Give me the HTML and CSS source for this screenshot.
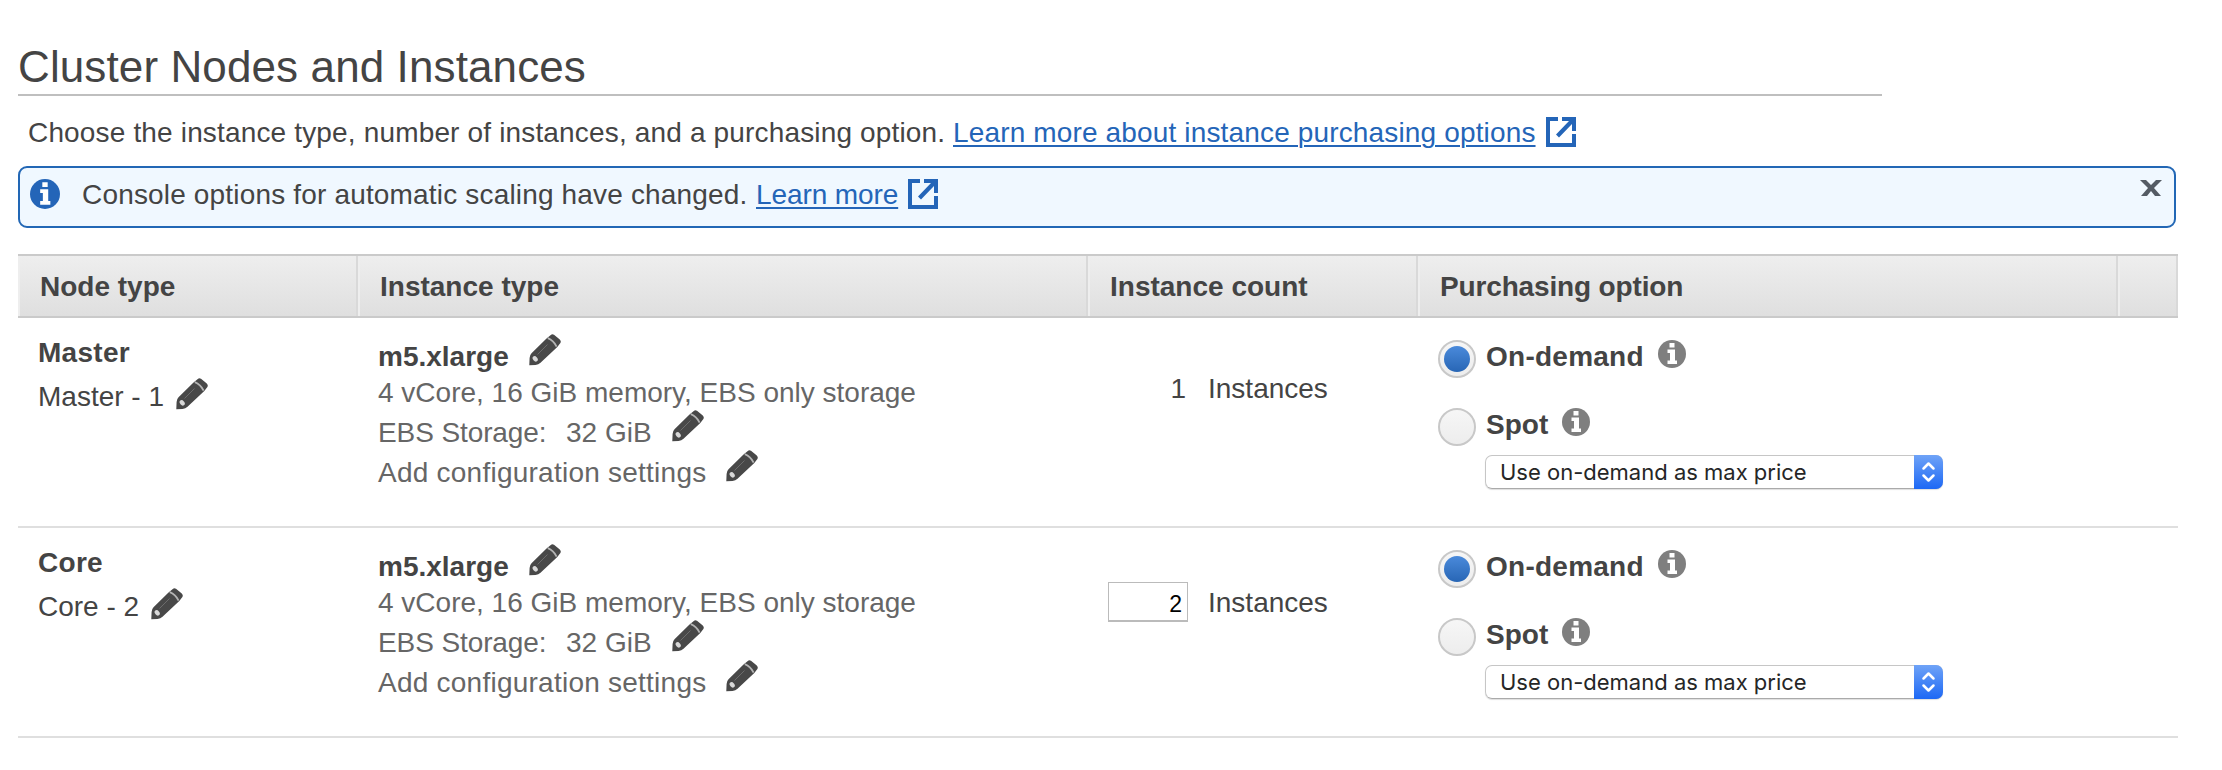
FILE: index.html
```html
<!DOCTYPE html>
<html lang="en">
<head>
<meta charset="utf-8">
<title>Cluster Nodes and Instances</title>
<link rel="stylesheet" href="styles.css">
</head>
<body>
<svg class="defs" width="0" height="0" aria-hidden="true">
  <symbol id="pencil" viewBox="0 0 32 32">
    <path fill="#484848" d="M17.500 4.500 21.800.9Q23.200-.3 25 .8L30.500 5.200Q32.500 7 31.400 9L28.300 13 11.500 28.800Q9.500 30.800 6.500 31L.3 31.300.6 24Q.7 21 2.500 19.200z"/>
    <path stroke="#b4b4b4" stroke-width="1.800" fill="none" d="M18.800 4.200Q24.500 6.500 27.600 12.600"/>
    <path stroke="#6c6c6c" stroke-width="1" fill="none" d="M18.500 10.500 8.500 20.500"/>
    <ellipse cx="6.200" cy="24.800" rx="2.200" ry="3" transform="rotate(-40 6.200 24.800)" fill="#d8d8d8"/>
  </symbol>
  <symbol id="ext" viewBox="0 0 30 30">
    <path fill="currentColor" d="M0 0H12V4H4V26H26V17H30V30H0zM16 0H30V14H26V7L13 20.500 10 17.500 23 4H16z"/>
  </symbol>
  <symbol id="info" viewBox="0 0 28 28">
    <circle cx="14" cy="14" r="14" fill="currentColor"/>
    <path fill="#fff" d="M11.500 3h5v4.500h-5zM9.500 9.500h7.500v11h2V24H9.500v-3.500h2.500V13H9.500z"/>
  </symbol>
</svg>
<main class="page">
  <h1 class="title"><span>Cluster Nodes and Instances</span></h1>
  <p class="intro"><span class="t-intro">Choose the instance type, number of instances, and a purchasing option.</span><a class="t-link1" href="#">Learn more about instance purchasing options</a><svg class="ext"><use href="#ext"/></svg></p>
  <div class="alert">
    <svg class="alert-info"><use href="#info"/></svg>
    <span class="t-alert">Console options for automatic scaling have changed.</span><a class="t-link2" href="#">Learn more</a><svg class="ext"><use href="#ext"/></svg>
    <svg class="close" viewBox="0 0 22 16"><path d="M0 0H6L11 5 16 0H22L14 8 21 16H15L11 11 7 16H1L8 8z" fill="#545b64"/></svg>
  </div>
  <section class="table">
    <div class="head cols">
      <div><span>Node type</span></div><div><span>Instance type</span></div><div><span>Instance count</span></div><div><span class="t-buy">Purchasing option</span></div><div></div>
    </div>
    <div class="row cols">
      <div class="node">
        <div class="name"><b>Master</b></div>
        <div class="label"><span>Master - 1</span><svg class="pencil"><use href="#pencil"/></svg></div>
      </div>
      <div class="type">
        <div class="model"><b>m5.xlarge</b><svg class="pencil"><use href="#pencil"/></svg></div>
        <div class="spec"><span>4 vCore, 16 GiB memory, EBS only storage</span></div>
        <div class="line"><span class="ebs">EBS Storage:</span><span class="size">32 GiB</span><svg class="pencil"><use href="#pencil"/></svg></div>
        <div class="line"><span class="t-add">Add configuration settings</span><svg class="pencil"><use href="#pencil"/></svg></div>
      </div>
      <div class="count"><span class="number">1</span><span class="t-inst">Instances</span></div>
      <div class="buy">
        <label class="choice"><i class="radio on"></i><b class="t-od">On-demand</b><svg class="info"><use href="#info"/></svg></label>
        <label class="choice"><i class="radio"></i><b class="t-spot">Spot</b><svg class="info"><use href="#info"/></svg></label>
        <div class="select"><span>Use on-demand as max price</span><svg class="stepper" viewBox="0 0 29 34"><path d="M9.500 13.500 14.500 8.500 19.500 13.500M9.500 20.500 14.500 25.500 19.500 20.500"/></svg></div>
      </div>
      <div></div>
    </div>
    <div class="row cols">
      <div class="node">
        <div class="name"><b>Core</b></div>
        <div class="label"><span>Core - 2</span><svg class="pencil"><use href="#pencil"/></svg></div>
      </div>
      <div class="type">
        <div class="model"><b>m5.xlarge</b><svg class="pencil"><use href="#pencil"/></svg></div>
        <div class="spec"><span>4 vCore, 16 GiB memory, EBS only storage</span></div>
        <div class="line"><span class="ebs">EBS Storage:</span><span class="size">32 GiB</span><svg class="pencil"><use href="#pencil"/></svg></div>
        <div class="line"><span class="t-add">Add configuration settings</span><svg class="pencil"><use href="#pencil"/></svg></div>
      </div>
      <div class="count editable"><span class="number">2</span><span class="t-inst">Instances</span></div>
      <div class="buy">
        <label class="choice"><i class="radio on"></i><b class="t-od">On-demand</b><svg class="info"><use href="#info"/></svg></label>
        <label class="choice"><i class="radio"></i><b class="t-spot">Spot</b><svg class="info"><use href="#info"/></svg></label>
        <div class="select"><span>Use on-demand as max price</span><svg class="stepper" viewBox="0 0 29 34"><path d="M9.500 13.500 14.500 8.500 19.500 13.500M9.500 20.500 14.500 25.500 19.500 20.500"/></svg></div>
      </div>
      <div></div>
    </div>
  </section>
</main>
</body>
</html>
```

FILE: styles.css
```css
* { box-sizing: border-box; }
body { margin: 0; background: #fff; color: #444; font: 28px/40px "Liberation Sans", Arial, sans-serif; white-space: nowrap; }
.defs { display: block; }
svg { flex: none; overflow: visible; }
a { color: #2465b8; text-decoration: underline; text-decoration-thickness: 2px; text-underline-offset: 3px; }
.page { padding: 40px 44px 0 18px; }
.title { margin: 0; width: 1864px; height: 56px; border-bottom: 2px solid #bfbfbf; font-size: 44px; font-weight: 400; line-height: 54px; letter-spacing: .11px; }
.intro { display: flex; align-items: center; margin: 16px 0 0 10px; height: 40px; }
.intro span, .intro a, .alert span, .alert a, .label span, .type span, .model b { padding-top: 2px; }
.t-intro { width: 925px; letter-spacing: .16px; }
.t-link1 { width: 583px; letter-spacing: .15px; }
.ext { width: 30px; height: 30px; margin-left: 10px; color: #2465b8; }
.alert { display: flex; align-items: center; width: 2158px; height: 62px; margin-top: 14px; padding: 0 12px 6px 10px; border: 2px solid #2267b5; border-radius: 9px; background: #f0f8ff; }
.alert-info { width: 30px; height: 30px; margin-right: 22px; color: #2465b8; }
.t-alert { width: 674px; letter-spacing: .17px; }
.t-link2 { width: 142px; letter-spacing: -.1px; }
.close { width: 22px; height: 16px; margin: -12px 0 0 auto; }
.table { width: 2160px; margin-top: 26px; }
.cols { display: grid; grid-template-columns: 340px 730px 330px 700px 60px; }
.head { height: 64px; border: solid #cacaca; border-width: 2px 0; background: linear-gradient(#eee, #dfdfdf); font-weight: 700; line-height: 62px; }
.head > div { height: 60px; padding-left: 20px; border-left: 2px solid #eee; border-right: 2px solid #d9d9d9; }
.t-buy { letter-spacing: -.15px; }
.row { height: 210px; border-bottom: 2px solid #dfdfdf; }
.node { padding: 15px 0 0 20px; }
.name b { letter-spacing: .3px; }
.label { display: flex; align-items: center; height: 44px; padding-top: 2px; }
.label .pencil { margin: -5px 0 0 12px; }
.pencil { width: 32px; height: 32px; }
.type { padding: 18px 0 0 20px; color: #666; }
.type b { color: #444; }
.model, .line, .spec { display: flex; align-items: center; height: 40px; }
.model .pencil, .line .pencil { margin: -12px 0 0 20px; }
.spec { height: 36px; line-height: 36px; margin-top: -2px; }
.line:nth-child(3) { margin-top: 2px; }
.ebs { width: 188px; letter-spacing: -.1px; }
.t-add { letter-spacing: .24px; }
.count { display: flex; align-items: center; height: 40px; margin-top: 51px; padding-left: 20px; }
.number { width: 80px; padding-right: 2px; text-align: right; }
.t-inst { margin-left: 20px; }
.editable { margin-top: 54px; }
.editable .t-inst { padding-top: 2px; }
.editable .number { height: 40px; padding-right: 5px; border: 2px solid #bbb; border-width: 1px 1px 2px; color: #000; font-size: 23px; line-height: 42px; }
.buy { padding: 20px 0 0 20px; }
.choice { display: flex; align-items: center; height: 42px; margin-bottom: 26px; }
.choice b { margin: -4px 0 0 10px; }
.t-od { letter-spacing: .25px; }
.radio { flex: none; width: 38px; height: 38px; border: 2px solid #c8c8c8; border-radius: 50%; background: linear-gradient(#f6f6f6, #ededed); }
.on { padding: 4px; }
.on::before { content: ""; display: block; height: 26px; border-radius: 50%; background: linear-gradient(#4a8adb, #2866b5); }
.info { width: 28px; height: 28px; margin: -10px 0 0 14px; color: #7f7f7f; }
.select { display: flex; width: 458px; height: 34px; margin: -19px 0 0 47px; padding-left: 14px; border: 1px solid #c6c6c6; border-bottom-color: #aaa; border-radius: 7px; box-shadow: 0 1px 1px #0002; color: #262626; font: 22px/33px Inter, sans-serif; }
.stepper { width: 29px; height: 34px; margin: -1px -1px 0 auto; border-radius: 0 7px 7px 0; background: linear-gradient(#6fa3f7, #1d68f5); }
.stepper path { fill: none; stroke: #fff; stroke-width: 2.500; stroke-linecap: round; stroke-linejoin: round; }
```
